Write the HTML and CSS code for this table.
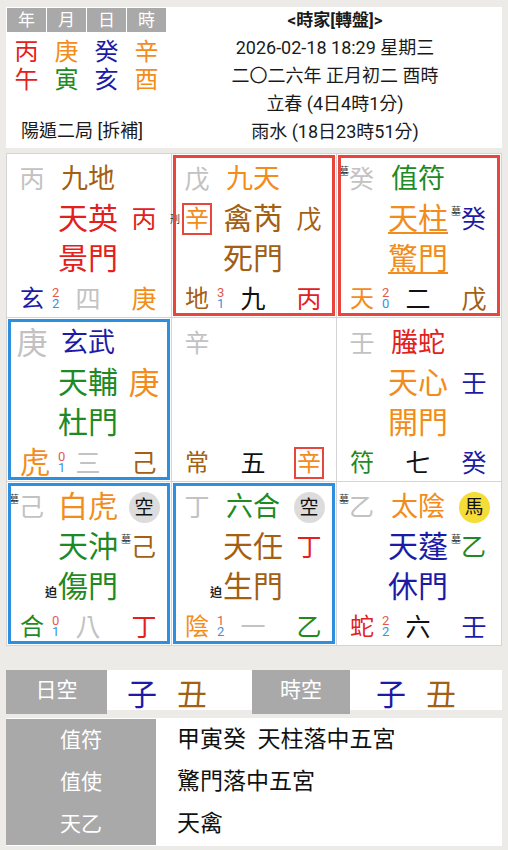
FILE: index.html
```html
<!DOCTYPE html>
<html lang="zh-Hant">
<head>
    <meta charset="UTF-8">
    <meta name="viewport" content="width=device-width, initial-scale=1.0">
    <title>時家轉盤</title>
    <link rel="stylesheet" href="styles.css">
</head>
<body>
    <div class="top">
        <div class="pillars">
            <div class="pillar-head">
                <span>年</span><span>月</span><span>日</span><span>時</span>
            </div>
            <div class="pillar-row">
                <span class="red">丙</span><span class="orange">庚</span><span class="blue">癸</span><span class="orange">辛</span>
            </div>
            <div class="pillar-row">
                <span class="red">午</span><span class="green">寅</span><span class="blue">亥</span><span class="orange">酉</span>
            </div>
            <div class="ju">陽遁二局 [拆補]</div>
        </div>
        <div class="info">
            <div class="info-title">&lt;時家[轉盤]&gt;</div>
            <div>2026-02-18 18:29 星期三</div>
            <div>二〇二六年 正月初二 酉時</div>
            <div>立春 (4日4時1分)</div>
            <div>雨水 (18日23時51分)</div>
        </div>
    </div>

    <div class="board">
        <!-- 巽四 -->
        <div class="cell">
            <span class="ca r1 stem gray">丙</span>
            <span class="cb r1 deity brown">九地</span>
            <span class="cb r2 star red">天英</span>
            <span class="cc r2 side red">丙</span>
            <span class="cb r3 star red">景門</span>
            <span class="ca r4 bot"><span class="blue">玄</span><span class="nums"><i>2</i><b>2</b></span></span>
            <span class="cb r4 num gray">四</span>
            <span class="cc r4 side orange">庚</span>
        </div>
        <!-- 離九 -->
        <div class="cell hl-red">
            <span class="ca r1 stem gray">戊</span>
            <span class="cb r1 deity orange">九天</span>
            <span class="ca r2 side"><em class="tag mid">刑</em><span class="boxed orange">辛</span></span>
            <span class="cb r2 star brown">禽芮</span>
            <span class="cc r2 side brown">戊</span>
            <span class="cb r3 star brown">死門</span>
            <span class="ca r4 bot"><span class="brown">地</span><span class="nums"><i>3</i><b>1</b></span></span>
            <span class="cb r4 num black">九</span>
            <span class="cc r4 side red">丙</span>
        </div>
        <!-- 坤二 -->
        <div class="cell hl-red">
            <span class="ca r1 stem gray"><em class="tag">墓</em>癸</span>
            <span class="cb r1 deity green">值符</span>
            <span class="cb r2 star orange ul">天柱</span>
            <span class="cc r2 side blue"><em class="tag">墓</em>癸</span>
            <span class="cb r3 star orange ul">驚門</span>
            <span class="ca r4 bot"><span class="orange">天</span><span class="nums"><i>2</i><b>0</b></span></span>
            <span class="cb r4 num black">二</span>
            <span class="cc r4 side brown">戊</span>
        </div>
        <!-- 震三 -->
        <div class="cell hl-blue">
            <span class="ca r1 stem big gray">庚</span>
            <span class="cb r1 deity blue">玄武</span>
            <span class="cb r2 star green">天輔</span>
            <span class="cc r2 side big orange">庚</span>
            <span class="cb r3 star green">杜門</span>
            <span class="ca r4 bot"><span class="orange big">虎</span><span class="nums"><i>0</i><b>1</b></span></span>
            <span class="cb r4 num gray">三</span>
            <span class="cc r4 side brown">己</span>
        </div>
        <!-- 中五 -->
        <div class="cell">
            <span class="ca r1 stem gray">辛</span>
            <span class="ca r4 bot"><span class="brown">常</span></span>
            <span class="cb r4 num black">五</span>
            <span class="cc r4 side"><span class="boxed orange">辛</span></span>
        </div>
        <!-- 兌七 -->
        <div class="cell">
            <span class="ca r1 stem gray">壬</span>
            <span class="cb r1 deity red">螣蛇</span>
            <span class="cb r2 star orange">天心</span>
            <span class="cc r2 side blue">壬</span>
            <span class="cb r3 star orange">開門</span>
            <span class="ca r4 bot"><span class="green">符</span></span>
            <span class="cb r4 num black">七</span>
            <span class="cc r4 side blue">癸</span>
        </div>
        <!-- 艮八 -->
        <div class="cell hl-blue">
            <span class="ca r1 stem gray"><em class="tag">墓</em>己</span>
            <span class="cb r1 deity big orange">白虎</span>
            <span class="cc r1 mark empty">空</span>
            <span class="cb r2 star green">天沖</span>
            <span class="cc r2 side brown"><em class="tag">墓</em>己</span>
            <span class="cb r3 star green"><em class="po">迫</em>傷門</span>
            <span class="ca r4 bot"><span class="green">合</span><span class="nums"><i>0</i><b>1</b></span></span>
            <span class="cb r4 num gray">八</span>
            <span class="cc r4 side red">丁</span>
        </div>
        <!-- 坎一 -->
        <div class="cell hl-blue">
            <span class="ca r1 stem gray">丁</span>
            <span class="cb r1 deity green">六合</span>
            <span class="cc r1 mark empty">空</span>
            <span class="cb r2 star brown">天任</span>
            <span class="cc r2 side red">丁</span>
            <span class="cb r3 star brown"><em class="po">迫</em>生門</span>
            <span class="ca r4 bot"><span class="orange">陰</span><span class="nums"><i>1</i><b>2</b></span></span>
            <span class="cb r4 num gray">一</span>
            <span class="cc r4 side green">乙</span>
        </div>
        <!-- 乾六 -->
        <div class="cell">
            <span class="ca r1 stem gray"><em class="tag">墓</em>乙</span>
            <span class="cb r1 deity orange">太陰</span>
            <span class="cc r1 mark horse">馬</span>
            <span class="cb r2 star blue">天蓬</span>
            <span class="cc r2 side green"><em class="tag">墓</em>乙</span>
            <span class="cb r3 star blue">休門</span>
            <span class="ca r4 bot"><span class="red">蛇</span><span class="nums"><i>2</i><b>2</b></span></span>
            <span class="cb r4 num black">六</span>
            <span class="cc r4 side blue">壬</span>
        </div>
    </div>

    <div class="kong">
        <div class="label">日空</div>
        <div class="kong-val first"><span class="blue">子</span><span class="brown">丑</span></div>
        <div class="label">時空</div>
        <div class="kong-val second"><span class="blue">子</span><span class="brown">丑</span></div>
    </div>

    <div class="summary">
        <div class="label">值符</div>
        <div class="value">甲寅癸&nbsp;&nbsp;天柱落中五宮</div>
        <div class="label">值使</div>
        <div class="value">驚門落中五宮</div>
        <div class="label">天乙</div>
        <div class="value">天禽</div>
    </div>
</body>
</html>
```

FILE: styles.css
```css
body {
    margin: 0;
    padding: 7px 6px 0;
    background-color: #ecebe7;
    font-family: 'Roboto', 'Noto Sans CJK TC', sans-serif;
    color: #111;
}

.red { color: #e3211c; }
.orange { color: #f28c1b; }
.brown { color: #a35f14; }
.blue { color: #1b1ba8; }
.green { color: #1f8a24; }
.gray { color: #c2c2c2; }
.black { color: #111; }

/* top info panel */
.top {
    background-color: #fff;
    height: 141px;
    display: flex;
}

.pillars {
    width: 161px;
    padding-left: 1px;
    display: flex;
    flex-direction: column;
}

.pillar-head,
.pillar-row {
    display: flex;
    gap: 1px;
}

.pillar-head {
    margin-top: 1px;
}

.pillar-head span {
    width: 39px;
    height: 24px;
    background-color: #a9a9a9;
    color: #fff;
    font-size: 17px;
    line-height: 24px;
    text-align: center;
}

.pillar-row span {
    width: 39px;
    height: 28px;
    font-size: 24px;
    line-height: 28px;
    text-align: center;
}

.pillar-head + .pillar-row {
    margin-top: 6px;
}

.ju {
    margin-top: auto;
    margin-bottom: 7px;
    padding-left: 14px;
    font-size: 18px;
    line-height: 20px;
    color: #1a1a1a;
}

.info {
    flex: 1;
    text-align: center;
    font-size: 18px;
    line-height: 28px;
    margin-top: -1px;
    color: #1a1a1a;
}

.info-title {
    font-size: 17px;
    font-weight: bold;
}

/* nine palaces */
.board {
    margin-top: 5px;
    background-color: #d4d4d4;
    padding: 1px;
    display: grid;
    grid-template-columns: repeat(3, 1fr);
    gap: 1px;
}

.cell {
    background-color: #fff;
    height: 163px;
    box-sizing: border-box;
    padding: 5px 8px 0;
    display: grid;
    grid-template-columns: 34px 78px 34px;
    grid-template-rows: repeat(4, 40px);
    align-items: center;
    justify-items: center;
    line-height: 1;
    white-space: nowrap;
}

.hl-red {
    outline: 3px solid #e8453c;
    outline-offset: -4px;
}

.hl-blue {
    outline: 3px solid #2c8fe0;
    outline-offset: -4px;
}

.ca { grid-column: 1; }
.cb { grid-column: 2; }
.cc { grid-column: 3; }
.r1 { grid-row: 1; }
.r2 { grid-row: 2; }
.r3 { grid-row: 3; }
.r4 { grid-row: 4; }

.stem { font-size: 25px; }
.deity { font-size: 27px; }
.star { font-size: 30px; }
.side { font-size: 25px; }
.num { font-size: 25px; }
.big { font-size: 31px; }
.deity.big { font-size: 30px; }

.bot {
    justify-self: start;
    margin-left: 5px;
    display: flex;
    align-items: center;
    gap: 8px;
    font-size: 24px;
}

.bot .big {
    font-size: 30px;
}

.nums {
    display: flex;
    flex-direction: column;
    font-size: 13px;
    line-height: 11px;
    margin-top: -2px;
}

.nums i {
    font-style: normal;
    color: #e05a55;
}

.nums b {
    font-weight: normal;
    color: #3c92dc;
}

.tag {
    font-style: normal;
    font-size: 10px;
    color: #333;
    vertical-align: top;
    margin-left: -11px;
}

.tag.mid {
    vertical-align: middle;
    margin-left: -12px;
    margin-right: 2px;
}

.po {
    font-style: normal;
    font-weight: bold;
    font-size: 12px;
    color: #222;
    margin-left: -13px;
    margin-right: 1px;
}

.boxed {
    display: inline-block;
    border: 2px solid #e8453c;
    padding: 2px 1px;
    font-size: 24px;
    line-height: 1;
}

.ul {
    text-decoration: underline;
    text-decoration-thickness: 2px;
    text-underline-offset: 3px;
}

.mark {
    width: 31px;
    height: 31px;
    border-radius: 50%;
    font-size: 19px;
    line-height: 31px;
    text-align: center;
    color: #111;
}

.empty {
    background-color: #dcdcdc;
}

.horse {
    background-color: #f6dc36;
}

/* void panel */
.kong {
    margin-top: 24px;
    background-color: #fff;
    height: 40px;
    display: grid;
    grid-template-columns: 101px 145px 98px 1fr;
}

.label {
    background-color: #a9a9a9;
    color: #fff;
    text-align: center;
    font-size: 21px;
}

.kong .label {
    line-height: 40px;
}

.kong-val {
    display: flex;
    align-items: center;
    gap: 20px;
    font-size: 30px;
}

.kong-val.first {
    padding-left: 20px;
}

.kong-val.second {
    padding-left: 26px;
}

/* summary panel */
.summary {
    margin-top: 8px;
    background-color: #fff;
    padding: 1px 0;
    display: grid;
    grid-template-columns: 150px 1fr;
    grid-auto-rows: 42px;
}

.summary .label {
    line-height: 42px;
}

.summary .value {
    padding-left: 21px;
    font-size: 23px;
    line-height: 42px;
    color: #111;
}
```
